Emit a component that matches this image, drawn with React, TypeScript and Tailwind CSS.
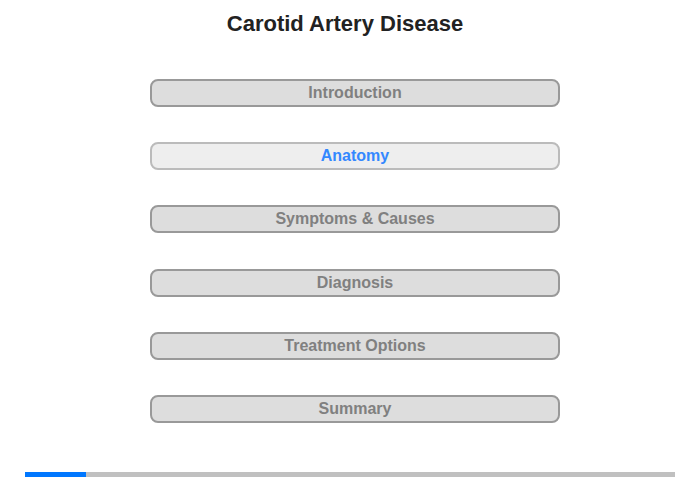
import React from 'react';

const sections = [
  'Introduction',
  'Anatomy',
  'Symptoms & Causes',
  'Diagnosis',
  'Treatment Options',
  'Summary',
];

const App: React.FC = () => {
  const active = 1;

  return (
    <div className="w-[700px] h-[480px] bg-white font-['Liberation_Sans',Arial,sans-serif] flex flex-col">
      <h1 className="pt-[10px] pr-[10px] text-center text-[22px] leading-[28px] font-bold text-[#222]">
        Carotid Artery Disease
      </h1>
      <div className="mt-[41px] flex flex-col gap-[35.2px] pl-[150px]">
        {sections.map((s, i) => (
          <button
            key={s}
            type="button"
            className={`w-[410px] h-[28px] rounded-[8px] border-2 text-[16px] font-bold leading-none ${
              i === active
                ? 'bg-[#eeeeee] border-[#bbbbbb] text-[#3388ff]'
                : 'bg-[#dddddd] border-[#999999] text-[#808080]'
            }`}
          >
            {s}
          </button>
        ))}
      </div>
      {/* progress */}
      <div className="mt-auto mb-[3px] mx-[25px] h-[5px] bg-[#c0c0c0] flex">
        <div className="w-[61px] h-full bg-[#0077ff]" />
      </div>
    </div>
  );
};

export default App;
